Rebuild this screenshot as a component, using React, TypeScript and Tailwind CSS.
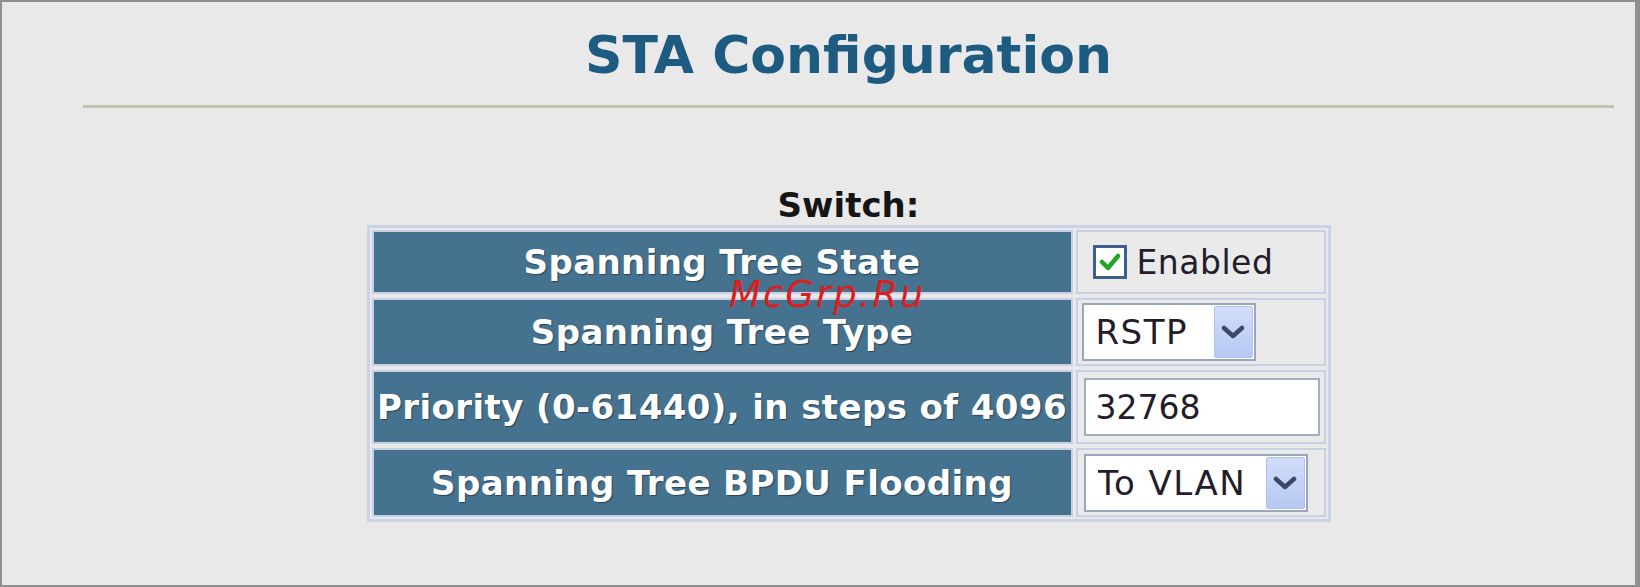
import { useState } from 'react'

const labelCell =
  "flex items-center justify-center border-2 border-[#c7d0e5] bg-[#44728f] text-white font-bold text-[34px] leading-none tracking-[0.4px] whitespace-nowrap [text-shadow:1px_1px_1px_rgba(20,30,45,0.55)]"
const valueCell = "flex items-center border-2 border-[#c7d0e5] bg-[#eaeaea] pl-[4px]"

function Chevron() {
  return (
    <svg width="24" height="14" viewBox="0 0 24 14" fill="none">
      <path d="M3 3 L12 11 L21 3" stroke="#3b4969" strokeWidth="4.5" strokeLinecap="round" strokeLinejoin="round" />
    </svg>
  )
}

function Dropdown({ value, options, width }: { value: string; options: string[]; width: string }) {
  const [v, setV] = useState(value)
  return (
    <div className={`relative h-[58px] ${width}`}>
      <select
        value={v}
        onChange={(e) => setV(e.target.value)}
        className="appearance-none w-full h-full bg-white border-2 border-[#9aa6bb] pl-[12px] text-[34px] tracking-[1.5px] text-[#241c2a] leading-none outline-none"
      >
        {options.map((o) => (
          <option key={o}>{o}</option>
        ))}
      </select>
      {/* dropdown button */}
      <span className="pointer-events-none absolute right-[3px] top-[3px] bottom-[3px] w-[39px] rounded-[2px] border border-[#b3c2ec] bg-gradient-to-b from-[#d3ddfa] to-[#b6c8f2] flex items-center justify-center">
        <Chevron />
      </span>
    </div>
  )
}

export default function App() {
  const [enabled, setEnabled] = useState(true)

  return (
    <div className="relative w-[1640px] h-[587px] bg-[#e9e9e9] border-t-2 border-l-2 border-b-2 border-r-[5px] border-[#8f8f8f] font-['DejaVu_Sans',Verdana,sans-serif] overflow-hidden">
      <div className="ml-[81px] w-[1531px] flex flex-col items-center">
        <h1 className="pt-[27px] text-[52px] leading-none font-bold text-[#1d5b81]">STA Configuration</h1>
        <div className="mt-[24px] w-full h-[3px] bg-[#c5c2ab]" />

        <p className="mt-[80px] text-[34px] leading-none font-bold text-[#151515]">Switch:</p>

        <div className="mt-[3px] border-[3px] border-[#cad3e8] p-[2px] grid grid-cols-[701px_250px] grid-rows-[64px_68px_74px_69px] gap-x-[3px] gap-y-[4px]">
          <div className={labelCell}>Spanning Tree State</div>
          <div className={valueCell}>
            <button
              onClick={() => setEnabled(!enabled)}
              className="ml-[11px] w-[34px] h-[34px] border-[3px] border-[#3d5f8c] bg-white flex items-center justify-center"
            >
              {enabled && (
                <svg width="22" height="20" viewBox="0 0 22 20" fill="none">
                  <path d="M3 10 L9 16 L19 4" stroke="#1fa625" strokeWidth="4.5" strokeLinecap="round" strokeLinejoin="round" />
                </svg>
              )}
            </button>
            <span className="ml-[10px] text-[33px] leading-none tracking-[0.5px] text-[#241c2a]">Enabled</span>
          </div>

          <div className={labelCell}>Spanning Tree Type</div>
          <div className={valueCell}>
            <Dropdown value="RSTP" options={['STP', 'RSTP', 'MSTP']} width="w-[174px]" />
          </div>

          <div className={labelCell}>Priority (0-61440), in steps of 4096</div>
          <div className={valueCell}>
            <input
              defaultValue="32768"
              className="ml-[2px] w-[236px] h-[58px] bg-white border-2 border-[#a4acbd] pl-[10px] text-[33px] leading-none text-[#241c2a] outline-none"
            />
          </div>

          <div className={labelCell}>Spanning Tree BPDU Flooding</div>
          <div className={valueCell}>
            <Dropdown value="To VLAN" options={['To VLAN', 'To All']} width="w-[224px] ml-[2px]" />
          </div>
        </div>
      </div>

      {/* watermark */}
      <span className="absolute left-[727px] top-[274px] text-[37px] leading-none italic tracking-[2px] text-[#d8201f] pointer-events-none">
        McGrp.Ru
      </span>
    </div>
  )
}
